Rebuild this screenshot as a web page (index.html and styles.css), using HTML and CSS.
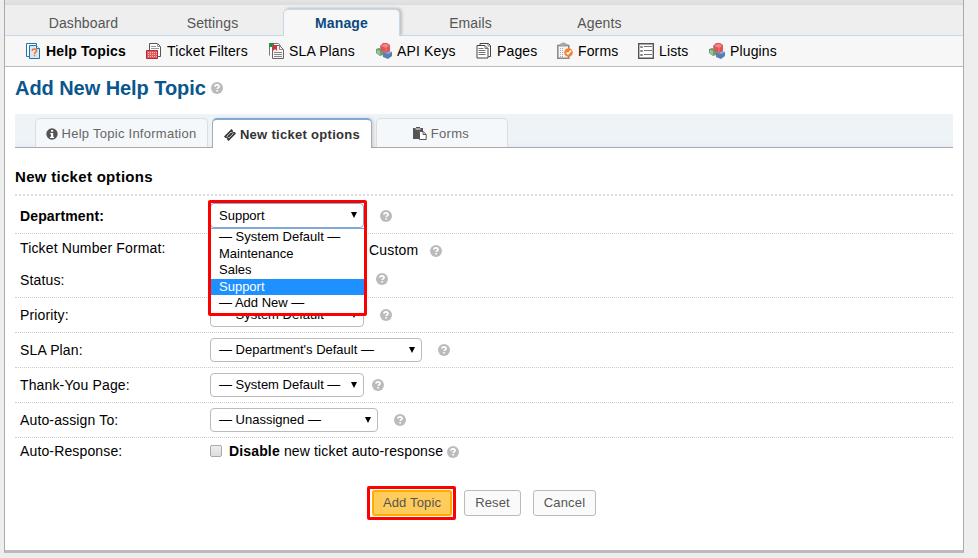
FILE: index.html
```
<!DOCTYPE html>
<html lang="en">
<head>
<meta charset="utf-8">
<title>Add New Help Topic</title>
<link rel="stylesheet" href="styles.css">
</head>
<body>
<svg class="defs" aria-hidden="true">
  <symbol id="help" viewBox="0 0 12 12"><circle cx="6" cy="6" r="6" fill="#bbb"/><path d="M3.900 4.600Q4 2.800 6 2.800T8.100 4.500C8.100 5.700 6.300 5.700 6.200 7" fill="none" stroke="#fff" stroke-width="1.700"/><path d="M5.300 8h1.700v1.600H5.300z" fill="#fff"/></symbol>
  <symbol id="blocks" viewBox="0 0 16 16"><path d="M0 6l3-1 4 1v6l-3 1-4-3z" fill="#68a06f"/><path d="M1 7l3 1v4l-3-2z" fill="#9bc69e"/><path d="M7 9l4-1 5 1v4l-4 3-5-2z" fill="#5480b4"/><path d="M7 9l4-1 5 1-4 2z" fill="#91b2d8"/><path d="M4 3l3-3h4l3 2v6l-4 2-5-2z" fill="#dc5558"/><path d="M5 3l3-2h3l2 2-3 2z" fill="#f18484"/><path d="M10 5v4" stroke="#ee7779"/></symbol>
</svg>
<div class="page">
  <div class="topbar"></div>
  <nav class="main-nav">
    <a>Dashboard</a><a>Settings</a><a class="active">Manage</a><a>Emails</a><a>Agents</a>
  </nav>
  <nav class="sub-nav">
    <a class="current"><svg viewBox="0 0 16 16"><path d="M3 13.500H.5V.5h10v2" fill="#fff" stroke="#1677ac"/><path d="M3.500 2.500h7l3 3v10h-10z" fill="#dfe5ea" stroke="#1677ac"/><path d="M10.500 2.500v3h3" fill="#fff" stroke="#1677ac"/><path d="M6 7.800q.2-1.800 2.300-1.800t2.200 1.900c0 1.400-2 1.400-2 3.200M7.800 12.600h1.500" fill="none" stroke="#f37032" stroke-width="1.500"/></svg>Help Topics</a>
    <a><svg viewBox="0 0 16 16"><path d="M3.500 8V.5h8l3 3v10H11" fill="#fff" stroke="#555"/><path d="M11.500.5v3h3M5 3.500h5M5 5.500h8" fill="none" stroke="#999"/><path d="M.5 7.500h11v8H.5z" fill="#e05a60" stroke="#b52a34"/><path d="M2 9.500h9M2 11.500h9M2 13.500h9" stroke="#f6b9bb" stroke-dasharray="1 1"/></svg>Ticket Filters</a>
    <a><svg viewBox="0 0 16 16"><path d="M1.500 12.500V.5h9l2 2" fill="#fff" stroke="#777"/><path d="M1 0h5v4H1z" fill="#159447"/><path d="M4.500 2.500h7l4 4v9h-11z" fill="#f4f4f4" stroke="#666"/><path d="M11.500 3v3.500h4M6 9.500h8M6 11.500h8M6 13.500h8" fill="none" stroke="#888"/><path d="M5 2h4v6L7 6 5 8z" fill="#e52836"/></svg>SLA Plans</a>
    <a><svg><use href="#blocks"/></svg>API Keys</a>
    <a><svg viewBox="-.5 0 16 16"><path d="M3.500 2.500V.5h8.500l2 2v11H12" fill="#fff" stroke="#444"/><path d="M.5 2.500h8l3 3v9.500H.5z" fill="#fff" stroke="#444"/><path d="M8.500 2.500v3h3M2 5.500h5M2 7.500h7M2 9.500h7M2 11.500h7M11.500 1v2h2" fill="none" stroke="#777"/></svg>Pages</a>
    <a><svg viewBox="0 0 16 16"><path d="M.8 2.500h11v12.700H.8z" fill="#f5f5f5" stroke="#888" stroke-width="1.500"/><path d="M3 3V1h2V0h3v1h2v2z" fill="#aaa" stroke="#888" stroke-width=".5"/><path d="M3.500 5v9M5.500 5v9" stroke="#aaa" stroke-dasharray="1 1"/><circle cx="11.500" cy="9.500" r="4.300" fill="#f58232"/><path d="M9.500 9.500l1.500 1.500 3-3.500" fill="none" stroke="#fff" stroke-width="1.400"/></svg>Forms</a>
    <a><svg viewBox="0 0 16 16"><path d="M.7.700h14.600v14.600H.7z" fill="#fff" stroke="#555" stroke-width="1.400"/><path d="M6 3.500h8M6 7.500h8M6 11.500h8" stroke="#777"/><path d="M2.500 3.500h2v1h-2zM2.500 7.500h2v1h-2zM2.500 11.500h2v1h-2z" fill="none" stroke="#888"/></svg>Lists</a>
    <a><svg><use href="#blocks"/></svg>Plugins</a>
  </nav>
  <main>
    <h1>Add New Help Topic <svg class="help"><use href="#help"/></svg></h1>
    <div class="tabs">
      <a class="tab info"><svg viewBox="0 0 12 12"><circle cx="6" cy="6" r="5.700" fill="#555"/><path d="M5 2h2.200v1.800H5zM4.200 5h3v3.700H8V10H4V8.700h1V6.200h-.8z" fill="#fff"/></svg>Help Topic Information</a>
      <a class="tab selected"><svg viewBox="0 0 12 12"><path d="M0 7.500L7.500 0l1.300 1.300a1.300 1.300 0 0 0 1.700 1.700L12 4.500 4.500 12l-1.300-1.300a1.300 1.300 0 0 0-1.700-1.700z" fill="#333"/><path d="M2.900 7.300L7.300 2.900 9.100 4.700 4.700 9.100z" fill="none" stroke="#fff" stroke-width=".8"/></svg>New ticket options</a>
      <a class="tab forms"><svg viewBox="0 0 14 13"><path d="M0 1h3V0h4v1h3v3H6v8H0z" fill="#555"/><path d="M2.500 2h5" stroke="#fff"/><path d="M6.500 4.500h3.700l3 3v5H6.500z" fill="#fff" stroke="#555"/><path d="M10 4.500v3h3" fill="none" stroke="#555"/></svg>Forms</a>
    </div>
    <h2>New ticket options</h2>
    <div class="form">
      <div class="row department">
        <label class="required">Department:</label>
        <div class="field">
          <div class="select focus">Support<i></i>
            <div class="menu">
              <div>— System Default —</div><div>Maintenance</div><div>Sales</div><div class="picked">Support</div><div>— Add New —</div>
            </div>
          </div>
          <svg class="help far"><use href="#help"/></svg>
        </div>
      </div>
      <div class="row number"><label>Ticket Number Format:</label><div class="field"><span>Custom</span><svg class="help"><use href="#help"/></svg></div></div>
      <div class="row status"><label>Status:</label><div class="field"><svg class="help"><use href="#help"/></svg></div></div>
      <div class="row"><label>Priority:</label><div class="field"><div class="select">— System Default —<i></i></div><svg class="help far"><use href="#help"/></svg></div></div>
      <div class="row"><label>SLA Plan:</label><div class="field"><div class="select wide">— Department's Default —<i></i></div><svg class="help far"><use href="#help"/></svg></div></div>
      <div class="row"><label>Thank-You Page:</label><div class="field"><div class="select">— System Default —<i></i></div><svg class="help near"><use href="#help"/></svg></div></div>
      <div class="row"><label>Auto-assign To:</label><div class="field"><div class="select medium">— Unassigned —<i></i></div><svg class="help far"><use href="#help"/></svg></div></div>
      <div class="row response"><label>Auto-Response:</label><div class="field"><span class="checkbox"></span><span><b>Disable</b> new ticket auto-response</span><svg class="help"><use href="#help"/></svg></div></div>
    </div>
    <div class="actions">
      <div class="highlight"><button class="primary">Add Topic</button></div>
      <button class="reset">Reset</button>
      <button class="cancel">Cancel</button>
    </div>
  </main>
</div>
</body>
</html>
```
FILE: styles.css
```
*, *::before, *::after { box-sizing: border-box; }
body {
  margin: 0;
  height: 558px;
  overflow: hidden;
  background: #eee;
  color: #000;
  font: 14px/16px "Liberation Sans", Arial, sans-serif;
  letter-spacing: .01em;
}
svg { display: block; flex: none; overflow: visible; }
.defs { position: absolute; width: 0; height: 0; }
.page {
  width: 960px;
  height: 553px;
  margin-left: 4px;
  background: #fff;
  border: solid #aaa;
  border-width: 0 1px;
  border-bottom: 3px solid #bbb;
}
.topbar { height: 5px; background: linear-gradient(#e4e4e4, #dcdcdc); }
.main-nav {
  display: flex;
  gap: 12px;
  height: 31px;
  padding: 4px 0 0 20px;
  background: #eee;
  border-bottom: 1px solid #c5d9e8;
}
.main-nav a {
  width: 117px;
  height: 27px;
  line-height: 28px;
  text-align: center;
  color: #555;
  letter-spacing: .12px;
}
.main-nav .active {
  line-height: 26px;
  border: 1px solid #c5d9e8;
  border-bottom: 0;
  border-radius: 5px 5px 0 0;
  background: #f7f7f7;
  box-shadow: 2px -1px 3px rgba(0, 0, 0, .2);
  clip-path: inset(-5px -5px 0 -5px);
  font-weight: bold;
  color: #0a4a80;
}
.sub-nav {
  display: grid;
  grid-template-columns: 121px 122px 108px 100px 81px 81px 71px 80px;
  height: 31px;
  padding-left: 20px;
  background: #f7f7f7;
  border-bottom: 1px solid #bbb;
}
.sub-nav a { display: flex; align-items: center; gap: 5px; white-space: nowrap; }
.sub-nav svg { width: 16px; height: 16px; }
.sub-nav .current { font-weight: bold; }
.sub-nav .current svg { margin: 0 -1px 0 1px; }
main { padding: 0 10px; }
h1 {
  display: flex;
  align-items: center;
  gap: 5px;
  height: 47px;
  margin: 0;
  padding-bottom: 5px;
  font-size: 20px;
  letter-spacing: -.06px;
  color: #0a568e;
}
.help { width: 12px; height: 12px; }
.tabs {
  display: flex;
  height: 34px;
  padding: 4px 0 0 20px;
  background: linear-gradient(#eef3f8 85%, #e7edf2);
  border-bottom: 1px solid #aaa;
  font-size: 13px;
}
.tab {
  display: flex;
  align-items: center;
  justify-content: center;
  gap: 4px;
  height: 29px;
  padding-top: 1px;
  background: #f4f8fb;
  border: 1px solid #ddd;
  border-bottom: 0;
  border-radius: 5px 5px 0 0;
  color: #666;
  white-space: nowrap;
}
.tab svg { width: 12px; height: 12px; }
.info { width: 173px; padding-right: 1px; letter-spacing: .26px; }
.selected {
  width: 160px;
  height: 30px;
  margin: 0 4px;
  background: #fff;
  border-color: #aaa;
  border-top: 2px solid #81a9d7;
  box-shadow: 2px 0 3px rgba(0, 0, 0, .12);
  clip-path: inset(-3px -5px 0 -5px);
  color: #333;
  font-weight: bold;
  letter-spacing: .3px;
}
.forms { width: 132px; padding-right: 2px; letter-spacing: .3px; }
.forms svg { width: 14px; height: 13px; }
h2 {
  height: 48px;
  margin: 0;
  padding-top: 21px;
  border-bottom: 2px dotted #ddd;
  font-size: 15px;
  letter-spacing: .3px;
}
.row {
  display: grid;
  grid-template-columns: 195px 1fr;
  align-items: center;
  height: 35px;
  border-bottom: 1px dotted #ccc;
}
.row label { padding-left: 5px; }
.required { font-weight: bold; }
.field { display: flex; align-items: center; }
.department { height: 38px; padding-top: 2px; }
.number { height: 32px; border: 0; padding-bottom: 4px; }
.number .field { padding: 5px 0 0 159px; gap: 12px; letter-spacing: .2px; }
.number .field span { padding-bottom: 2px; }
.status { height: 32px; padding-bottom: 4px; }
.status .field { padding: 0 0 2px 166px; }
.response { height: 29px; border: 0; padding-bottom: 3px; }
.response .field { letter-spacing: .15px; }
.response .help { margin: 2px 0 0 4px; }
.select {
  position: relative;
  width: 154px;
  height: 24px;
  padding-left: 8px;
  border: 1px solid #bbb;
  border-radius: 4px;
  background: #fff;
  font-size: 13px;
  line-height: 22px;
  letter-spacing: 0;
  white-space: nowrap;
}
.select i {
  position: absolute;
  right: 6px;
  top: 8px;
  border: solid transparent;
  border-width: 6px 3px 0;
  border-top-color: #000;
}
.wide { width: 212px; }
.medium { width: 168px; }
.far { margin-left: 16px; }
.near { margin-left: 8px; }
.focus { height: 25px; border-color: #81a9d7; line-height: 23px; }
.focus::after {
  content: "";
  position: absolute;
  z-index: 3;
  left: -3px;
  top: -4px;
  width: 159px;
  height: 116px;
  border: 3px solid #f00;
  border-radius: 2px;
}
.menu {
  position: absolute;
  z-index: 2;
  left: 0;
  top: 24px;
  width: 153px;
  height: 86px;
  border: solid #81a9d7;
  border-width: 1px 0;
  background: #fff;
}
.menu div { height: 16.500px; padding-left: 8px; line-height: 16.500px; }
.menu .picked { background: #1e90ff; color: #fff; }
.actions { display: flex; align-items: center; padding: 19px 0 0 352px; }
button {
  height: 26px;
  padding: 0 0 2px;
  border: 1px solid #bbb;
  border-radius: 3px;
  background: #fafafa;
  color: #555;
  font: 13px "Liberation Sans", Arial, sans-serif;
  letter-spacing: .15px;
}
.highlight {
  width: 89px;
  height: 34px;
  padding: 1px 2px;
  border: 3px solid #f00;
  border-radius: 2px;
}
.primary { display: block; width: 80px; border: 2px solid #ffae00; background: #ffcb5b; }
.reset { width: 57px; margin: 0 12px 0 8px; }
.cancel { width: 63px; }
.checkbox {
  width: 12px;
  height: 12px;
  margin-right: 7px;
  border: 1px solid #aaa;
  border-radius: 2px;
  background: linear-gradient(#eee, #ddd);
}
```
